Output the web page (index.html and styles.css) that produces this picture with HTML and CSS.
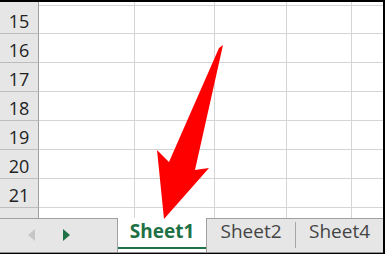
FILE: index.html
```html
<!DOCTYPE html>
<html>
<head>
<meta charset="utf-8">
<link rel="stylesheet" href="styles.css">
</head>
<body>
<div class="frame">
  <div class="grid">
    <div class="row partial"><div class="hd"></div><div class="c"></div><div class="c"></div><div class="c"></div><div class="c"></div><div class="c last"></div></div>
    <div class="row"><div class="hd">15</div><div class="c"></div><div class="c"></div><div class="c"></div><div class="c"></div><div class="c last"></div></div>
    <div class="row"><div class="hd">16</div><div class="c"></div><div class="c"></div><div class="c"></div><div class="c"></div><div class="c last"></div></div>
    <div class="row"><div class="hd">17</div><div class="c"></div><div class="c"></div><div class="c"></div><div class="c"></div><div class="c last"></div></div>
    <div class="row"><div class="hd">18</div><div class="c"></div><div class="c"></div><div class="c"></div><div class="c"></div><div class="c last"></div></div>
    <div class="row"><div class="hd">19</div><div class="c"></div><div class="c"></div><div class="c"></div><div class="c"></div><div class="c last"></div></div>
    <div class="row"><div class="hd">20</div><div class="c"></div><div class="c"></div><div class="c"></div><div class="c"></div><div class="c last"></div></div>
    <div class="row"><div class="hd">21</div><div class="c"></div><div class="c"></div><div class="c"></div><div class="c"></div><div class="c last"></div></div>
    <div class="row"><div class="hd">22</div><div class="c"></div><div class="c"></div><div class="c"></div><div class="c"></div><div class="c last"></div></div>
  </div>
  <div class="tabbar">
    <div class="nav">
      <span class="tri prev"></span>
      <span class="tri next"></span>
    </div>
    <div class="tab active">Sheet1</div>
    <div class="rest">
      <div class="tab t2">Sheet2</div>
      <div class="sep"></div>
      <div class="tab t4">Sheet4</div>
    </div>
  </div>
  <svg class="arrow" width="385" height="254" viewBox="0 0 385 254">
    <polygon points="223,45 195,170 209,168 164,219 157,150 169,162 219,48" fill="#ff0000"/>
  </svg>
</div>
</body>
</html>
```

FILE: styles.css
```css
html, body {
  margin: 0;
  padding: 0;
  background: #fff;
}

.frame {
  position: relative;
  width: 385px;
  height: 254px;
  box-sizing: border-box;
  border-top: 2px solid #000;
  border-right: 2px solid #000;
  border-bottom: 1px solid #000;
  display: flex;
  flex-direction: column;
  overflow: hidden;
  font-family: "Open Sans", "Noto Sans", sans-serif;
}

.grid {
  flex: 1;
  overflow: hidden;
  display: flex;
  flex-direction: column;
}

.row {
  display: grid;
  grid-template-columns: 39px 96px 80px 72px 65px 1fr;
  height: 29px;
  flex: none;
}

.row.partial {
  height: 3px;
}

.c, .hd {
  box-sizing: border-box;
  border-right: 1px solid #d4d4d4;
  border-bottom: 1px solid #d4d4d4;
}

.c.last {
  border-right: none;
}

.hd {
  background: #e6e6e6;
  border-right-color: #9e9e9e;
  border-bottom-color: #bdbdbd;
  color: #222;
  font-size: 18px;
  display: flex;
  align-items: center;
  justify-content: center;
  padding-top: 3px;
}

.tabbar {
  flex: none;
  height: 35px;
  box-sizing: border-box;
  display: flex;
  background: #e6e6e6;
  border-bottom: 1px solid #8f8f8f;
}

.nav {
  width: 117px;
  border-top: 1px solid #a0a0a0;
  display: flex;
  align-items: center;
  padding-bottom: 2px;
  box-sizing: border-box;
}

.tri {
  width: 0;
  height: 0;
  border-top: 6px solid transparent;
  border-bottom: 6px solid transparent;
}

.tri.prev {
  margin-left: 28px;
  border-right: 7px solid #c6c6c6;
}

.tri.next {
  margin-left: 28px;
  border-left: 7px solid #1e7145;
}

.tab {
  box-sizing: border-box;
  text-align: center;
  font-size: 19px;
  line-height: 25px;
  color: #444;
}

.tab.active {
  width: 90px;
  background: #fff;
  border-left: 1px solid #a0a0a0;
  border-right: 1px solid #a0a0a0;
  color: #1e7145;
  font-weight: bold;
  padding-top: 1px;
  box-shadow: inset 0 -3px 0 #fff, inset 0 -5px 0 #1e7145;
}

.rest {
  flex: 1;
  display: flex;
  border-top: 1px solid #a0a0a0;
}

.t2 {
  width: 88px;
}

.t4 {
  flex: 1;
}

.sep {
  width: 1px;
  background: #a6a6a6;
  margin: 3px 0 4px;
}

.arrow {
  position: absolute;
  left: 0;
  top: -2px;
  pointer-events: none;
}
```
